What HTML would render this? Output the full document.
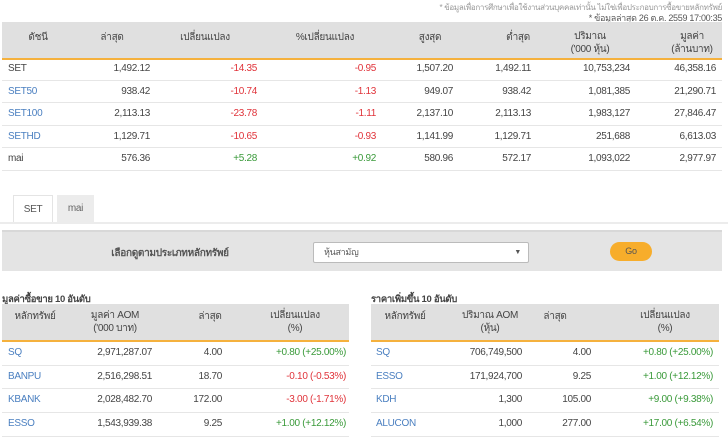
<!DOCTYPE html>
<html><head><meta charset="utf-8"><style>
*{margin:0;padding:0;box-sizing:border-box}
body{width:728px;height:437px;background:#fff;font-family:"Liberation Sans","Noto Sans CJK SC",sans-serif;font-size:10px;color:#444;position:relative;overflow:hidden;letter-spacing:-0.3px}
.a{position:absolute;white-space:nowrap}
.r{text-align:right}.c{text-align:center}
.red{color:#e0333a}.grn{color:#3a9a3a}.blu{color:#4a7fc0}
.hd{position:absolute;background:#e0e0e0;border-bottom:2px solid #f5b13d}
.ln{position:absolute;height:1px;background:#e6e6e6}
</style></head><body>
<div class="a r" style="right:6px;top:1px;font-size:8px;color:#999">* ข้อมูลเพื่อการศึกษาเพื่อใช้งานส่วนบุคคลเท่านั้น ไม่ใช่เพื่อประกอบการซื้อขายหลักทรัพย์</div>
<div class="a r" style="right:6px;top:11px;font-size:9px;color:#555">* ข้อมูลล่าสุด 26 ต.ค. 2559 17:00:35</div>
<div class="hd" style="left:2px;top:22px;width:720px;height:38px"></div>
<div class="a c" style="left:18px;top:30px;width:40px">ดัชนี</div>
<div class="a c" style="left:92px;top:30px;width:40px">ล่าสุด</div>
<div class="a c" style="left:170px;top:30px;width:70px">เปลี่ยนแปลง</div>
<div class="a c" style="left:285px;top:30px;width:80px">%เปลี่ยนแปลง</div>
<div class="a c" style="left:410px;top:30px;width:40px">สูงสุด</div>
<div class="a c" style="left:498px;top:30px;width:40px">ต่ำสุด</div>
<div class="a c" style="left:560px;top:30px;width:60px;line-height:13px">ปริมาณ<br>('000 หุ้น)</div>
<div class="a c" style="left:662px;top:30px;width:60px;line-height:13px">มูลค่า<br>(ล้านบาท)</div>

<div class="ln" style="left:2px;top:80px;width:720px"></div>
<div class="ln" style="left:2px;top:102px;width:720px"></div>
<div class="ln" style="left:2px;top:125px;width:720px"></div>
<div class="ln" style="left:2px;top:147px;width:720px"></div>
<div class="ln" style="left:2px;top:170px;width:720px"></div>

<div style="position:absolute;left:0;top:63px;width:728px">
<div style="position:relative;height:22.5px">
<span class="a" style="left:8px">SET</span><span class="a r" style="right:578px">1,492.12</span><span class="a r red" style="right:471px">-14.35</span><span class="a r red" style="right:352px">-0.95</span><span class="a r" style="right:275px">1,507.20</span><span class="a r" style="right:197px">1,492.11</span><span class="a r" style="right:98px">10,753,234</span><span class="a r" style="right:12px">46,358.16</span></div>
<div style="position:relative;height:22.5px">
<span class="a blu" style="left:8px">SET50</span><span class="a r" style="right:578px">938.42</span><span class="a r red" style="right:471px">-10.74</span><span class="a r red" style="right:352px">-1.13</span><span class="a r" style="right:275px">949.07</span><span class="a r" style="right:197px">938.42</span><span class="a r" style="right:98px">1,081,385</span><span class="a r" style="right:12px">21,290.71</span></div>
<div style="position:relative;height:22.5px">
<span class="a blu" style="left:8px">SET100</span><span class="a r" style="right:578px">2,113.13</span><span class="a r red" style="right:471px">-23.78</span><span class="a r red" style="right:352px">-1.11</span><span class="a r" style="right:275px">2,137.10</span><span class="a r" style="right:197px">2,113.13</span><span class="a r" style="right:98px">1,983,127</span><span class="a r" style="right:12px">27,846.47</span></div>
<div style="position:relative;height:22.5px">
<span class="a blu" style="left:8px">SETHD</span><span class="a r" style="right:578px">1,129.71</span><span class="a r red" style="right:471px">-10.65</span><span class="a r red" style="right:352px">-0.93</span><span class="a r" style="right:275px">1,141.99</span><span class="a r" style="right:197px">1,129.71</span><span class="a r" style="right:98px">251,688</span><span class="a r" style="right:12px">6,613.03</span></div>
<div style="position:relative;height:22.5px">
<span class="a" style="left:8px">mai</span><span class="a r" style="right:578px">576.36</span><span class="a r grn" style="right:471px">+5.28</span><span class="a r grn" style="right:352px">+0.92</span><span class="a r" style="right:275px">580.96</span><span class="a r" style="right:197px">572.17</span><span class="a r" style="right:98px">1,093,022</span><span class="a r" style="right:12px">2,977.97</span></div>
</div>

<div class="a" style="left:13px;top:195px;width:40px;height:28px;border:1px solid #e4e4e4;border-bottom:none;background:#fff;text-align:center;line-height:27px;color:#555">SET</div>
<div class="a" style="left:57px;top:195px;width:37px;height:27px;background:#ececec;text-align:center;line-height:27px;color:#666">mai</div>
<div class="ln" style="left:0;top:222px;width:728px;height:2px;background:#ececec"></div>

<div class="a" style="left:2px;top:230px;width:720px;height:41px;background:#e4e4e4;border-top:2px solid #d8d8d8"></div>
<div class="a c" style="left:90px;top:246px;width:160px;font-weight:bold;color:#555">เลือกดูตามประเภทหลักทรัพย์</div>
<div class="a" style="left:313px;top:242px;width:216px;height:21px;background:#fff;border:1px solid #bbb;border-radius:2px;padding-left:10px;line-height:19px;color:#555;font-size:9px">หุ้นสามัญ<span style="position:absolute;right:7px;font-size:7px">▼</span></div>
<div class="a c" style="left:610px;top:242px;width:42px;height:19px;background:#f7ad2b;border-radius:10px;line-height:19px;color:#555;font-size:9px">Go</div>

<div class="a" style="left:2px;top:292px;font-weight:bold;color:#444;font-size:9.5px">มูลค่าซื้อขาย 10 อันดับ</div>
<div class="a" style="left:371px;top:292px;font-weight:bold;color:#444;font-size:9.5px">ราคาเพิ่มขึ้น 10 อันดับ</div>

<div class="hd" style="left:2px;top:304px;width:347px;height:38px"></div>
<div class="hd" style="left:371px;top:304px;width:348px;height:38px"></div>
<div class="a c" style="left:5px;top:309px;width:60px">หลักทรัพย์</div>
<div class="a c" style="left:80px;top:309px;width:70px;line-height:13px">มูลค่า AOM<br>('000 บาท)</div>
<div class="a c" style="left:190px;top:309px;width:40px">ล่าสุด</div>
<div class="a c" style="left:250px;top:309px;width:90px;line-height:13px">เปลี่ยนแปลง<br>(%)</div>
<div class="a c" style="left:375px;top:309px;width:60px">หลักทรัพย์</div>
<div class="a c" style="left:450px;top:309px;width:80px;line-height:13px">ปริมาณ AOM<br>(หุ้น)</div>
<div class="a c" style="left:535px;top:309px;width:40px">ล่าสุด</div>
<div class="a c" style="left:620px;top:309px;width:90px;line-height:13px">เปลี่ยนแปลง<br>(%)</div>

<div class="ln" style="left:2px;top:365px;width:347px"></div><div class="ln" style="left:371px;top:365px;width:348px"></div>
<div class="ln" style="left:2px;top:388px;width:347px"></div><div class="ln" style="left:371px;top:388px;width:348px"></div>
<div class="ln" style="left:2px;top:412px;width:347px"></div><div class="ln" style="left:371px;top:412px;width:348px"></div>
<div class="ln" style="left:2px;top:436px;width:347px"></div><div class="ln" style="left:371px;top:436px;width:348px"></div>

<div style="position:absolute;left:0;top:347px;width:728px">
<div style="position:relative;height:23.7px"><span class="a blu" style="left:8px">SQ</span><span class="a r" style="right:576px">2,971,287.07</span><span class="a r" style="right:506px">4.00</span><span class="a r grn" style="right:382px">+0.80 (+25.00%)</span>
<span class="a blu" style="left:376px">SQ</span><span class="a r" style="right:206px">706,749,500</span><span class="a r" style="right:137px">4.00</span><span class="a r grn" style="right:15px">+0.80 (+25.00%)</span></div>
<div style="position:relative;height:23.7px"><span class="a blu" style="left:8px">BANPU</span><span class="a r" style="right:576px">2,516,298.51</span><span class="a r" style="right:506px">18.70</span><span class="a r red" style="right:382px">-0.10 (-0.53%)</span>
<span class="a blu" style="left:376px">ESSO</span><span class="a r" style="right:206px">171,924,700</span><span class="a r" style="right:137px">9.25</span><span class="a r grn" style="right:15px">+1.00 (+12.12%)</span></div>
<div style="position:relative;height:23.7px"><span class="a blu" style="left:8px">KBANK</span><span class="a r" style="right:576px">2,028,482.70</span><span class="a r" style="right:506px">172.00</span><span class="a r red" style="right:382px">-3.00 (-1.71%)</span>
<span class="a blu" style="left:376px">KDH</span><span class="a r" style="right:206px">1,300</span><span class="a r" style="right:137px">105.00</span><span class="a r grn" style="right:15px">+9.00 (+9.38%)</span></div>
<div style="position:relative;height:23.7px"><span class="a blu" style="left:8px">ESSO</span><span class="a r" style="right:576px">1,543,939.38</span><span class="a r" style="right:506px">9.25</span><span class="a r grn" style="right:382px">+1.00 (+12.12%)</span>
<span class="a blu" style="left:376px">ALUCON</span><span class="a r" style="right:206px">1,000</span><span class="a r" style="right:137px">277.00</span><span class="a r grn" style="right:15px">+17.00 (+6.54%)</span></div>
</div>
</body></html>
